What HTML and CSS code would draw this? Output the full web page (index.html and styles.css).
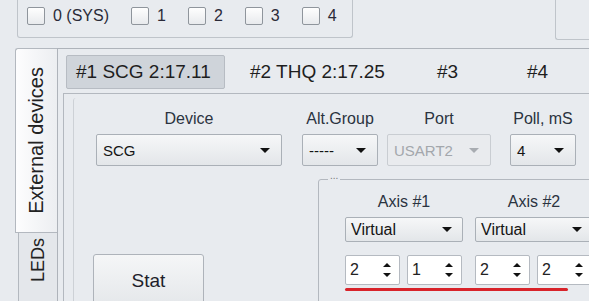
FILE: index.html
```html
<html>
<head>
  <title>Device config</title>
  <link rel="stylesheet" href="styles.css">
</head>
<body>
  <div class="top">
    <div class="channels">
      <div class="check"><span class="box"></span>0 (SYS)</div>
      <div class="check"><span class="box"></span>1</div>
      <div class="check"><span class="box"></span>2</div>
      <div class="check"><span class="box"></span>3</div>
      <div class="check"><span class="box"></span>4</div>
    </div>
    <div class="side"></div>
  </div>
  <div class="main">
    <div class="vtabs">
      <div class="vtab on"><span>External devices</span></div>
      <div class="vtab off"><span>LEDs</span></div>
    </div>
    <div class="pane">
      <div class="htabs">
        <div class="htab on">#1 SCG 2:17.11</div>
        <div class="htab">#2 THQ 2:17.25</div>
        <div class="htab">#3</div>
        <div class="htab">#4</div>
      </div>
      <div class="inner">
        <div class="frame">
          <div class="fields">
            <div class="field f-device">
              <label>Device</label>
              <div class="combo"><span>SCG</span><span class="arrow"></span></div>
            </div>
            <div class="field f-alt">
              <label>Alt.Group</label>
              <div class="combo"><span>-----</span><span class="arrow"></span></div>
            </div>
            <div class="field f-port">
              <label>Port</label>
              <div class="combo off"><span>USART2</span><span class="arrow"></span></div>
            </div>
            <div class="field f-poll">
              <label>Poll, mS</label>
              <div class="combo"><span>4</span><span class="arrow"></span></div>
            </div>
          </div>
          <div class="lower">
            <button class="stat">Stat</button>
            <fieldset class="group">
              <legend>...</legend>
              <div class="axes">
                <div class="axis">
                  <label>Axis #1</label>
                  <div class="combo small"><span>Virtual</span><span class="arrow"></span></div>
                  <div class="spins">
                    <div class="spin"><span>2</span><span class="updown"><i class="up"></i><i class="down"></i></span></div>
                    <div class="spin"><span>1</span><span class="updown"><i class="up"></i><i class="down"></i></span></div>
                  </div>
                </div>
                <div class="axis">
                  <label>Axis #2</label>
                  <div class="combo small"><span>Virtual</span><span class="arrow"></span></div>
                  <div class="spins">
                    <div class="spin"><span>2</span><span class="updown"><i class="up"></i><i class="down"></i></span></div>
                    <div class="spin"><span>2</span><span class="updown"><i class="up"></i><i class="down"></i></span></div>
                  </div>
                </div>
              </div>
              <div class="mark"></div>
            </fieldset>
          </div>
        </div>
      </div>
    </div>
  </div>
</body>
</html>
```
FILE: styles.css
```css
* {
  box-sizing: border-box;
}
body {
  margin: 0;
  width: 589px;
  height: 301px;
  overflow: hidden;
  background: #e8ebef;
  font-family: "Liberation Sans", Arial, sans-serif;
  color: #222;
}
.top {
  display: flex;
  height: 48px;
}
.channels {
  margin-left: 17px;
  width: 336px;
  height: 38px;
  flex-shrink: 0;
  border: 1px solid #bfc4ca;
  border-top: none;
  border-radius: 0 0 3px 3px;
  display: flex;
  align-items: flex-start;
  gap: 22px;
  padding: 7px 0 0 9px;
}
.check {
  display: flex;
  align-items: center;
  gap: 8px;
  font-size: 16px;
  line-height: 18px;
  color: #2a2a38;
}
.box {
  width: 18px;
  height: 18px;
  border: 1px solid #8f959c;
  border-radius: 2px;
  background: linear-gradient(#fefefe, #e8eaed);
}
.side {
  margin-left: 202px;
  width: 60px;
  height: 40px;
  flex-shrink: 0;
  border: 1px solid #bfc4ca;
  border-top: none;
  border-right: none;
  border-radius: 0 0 0 3px;
}
.main {
  display: flex;
  padding-left: 15px;
  height: 253px;
}
.vtabs {
  width: 42px;
  flex-shrink: 0;
  display: flex;
  flex-direction: column;
}
.vtab {
  flex-shrink: 0;
  border: 1px solid #b3b8bf;
  border-right: none;
  display: flex;
  flex-direction: column;
  align-items: center;
}
.vtab span {
  writing-mode: vertical-rl;
  transform: rotate(180deg);
  font-size: 18px;
  white-space: nowrap;
}
.vtab.on {
  height: 185px;
  justify-content: center;
  border-radius: 3px 0 0 0;
  background: linear-gradient(90deg, #fdfdfe, #eceef1);
}
.vtab.on span {
  font-size: 20px;
}
.vtab.off {
  margin-left: 3px;
  height: 90px;
  border-top: none;
  padding-top: 5px;
  background: #e4e7eb;
}
.pane {
  flex: 1;
  min-width: 0;
  border-left: 1px solid #aeb3ba;
  border-top: 1px solid #aeb3ba;
  padding: 6px 0 0 5px;
}
.htabs {
  display: grid;
  grid-template-columns: 174px 187px 90px 60px;
  height: 34px;
  margin: 0 0 4px 3px;
  font-size: 19px;
}
.htab {
  height: 34px;
  line-height: 34px;
  padding-left: 10px;
  white-space: nowrap;
  color: #1e1e1e;
}
.htab.on {
  width: 159px;
  padding-left: 9px;
  line-height: 32px;
  background: #cfd4da;
  border: 1px solid #b7bcc3;
  border-radius: 2px;
}
.inner {
  border-top: 1px solid #b3b8bf;
  border-left: 1px solid #b3b8bf;
  padding: 4px 0 0 9px;
  height: 210px;
}
.frame {
  border-left: 1px solid #cdd1d6;
  border-top-left-radius: 3px;
  padding: 12px 0 0 19px;
  height: 210px;
}
.fields {
  display: flex;
  margin-left: 3px;
}
.field {
  display: flex;
  flex-direction: column;
  align-items: center;
  flex-shrink: 0;
}
label {
  font-size: 16px;
  line-height: 18px;
  margin-bottom: 6px;
  color: #2b3340;
  white-space: nowrap;
}
.f-device { width: 186px; }
.f-alt { width: 76px; margin-left: 20px; }
.f-port { width: 104px; margin-left: 9px; }
.f-poll { width: 66px; margin-left: 19px; }
.combo {
  width: 100%;
  height: 32px;
  display: flex;
  align-items: center;
  justify-content: space-between;
  padding: 0 11px 0 6px;
  border: 1px solid #aab0b7;
  border-radius: 2px;
  background: linear-gradient(#f6f7f8, #e3e6e9);
  font-size: 15px;
  color: #151515;
  white-space: nowrap;
}
.combo.off {
  color: #a3a7ac;
  background: #e9ebee;
  border-color: #c9cdd2;
}
.combo.small {
  height: 25px;
  padding-left: 5px;
  padding-right: 10px;
  font-size: 16px;
}
.arrow {
  width: 0;
  height: 0;
  border-left: 5px solid transparent;
  border-right: 5px solid transparent;
  border-top: 5px solid #111;
}
.combo.off .arrow {
  border-top-color: #a8acb1;
}
.lower {
  display: flex;
  align-items: flex-start;
  margin-top: 6px;
}
.stat {
  flex-shrink: 0;
  margin-top: 82px;
  width: 111px;
  height: 54px;
  border: 1px solid #aeb3ba;
  border-radius: 3px;
  background: linear-gradient(#f5f6f7, #e4e7ea);
  font-family: "Liberation Sans", Arial, sans-serif;
  font-size: 19px;
  color: #1e1e2a;
}
.group {
  flex-shrink: 0;
  margin: 0 0 0 114px;
  width: 320px;
  padding: 7px 0 20px 26px;
  border: 1px solid #b3b8bf;
  border-radius: 3px;
}
.group legend {
  margin-left: -17px;
  padding: 0 2px 6px;
  font-size: 10px;
  line-height: 8px;
  color: #777;
}
.axes {
  display: flex;
  gap: 12px;
}
.axis {
  width: 118px;
  flex-shrink: 0;
  display: flex;
  flex-direction: column;
  align-items: center;
}
.spins {
  display: flex;
  gap: 7px;
  margin-top: 13px;
  width: 100%;
}
.spin {
  width: 55px;
  height: 30px;
  display: flex;
  align-items: center;
  justify-content: space-between;
  padding: 0 8px 0 4px;
  background: #fff;
  border: 1px solid #b5bac1;
  border-radius: 2px;
  font-size: 16px;
}
.updown {
  display: flex;
  flex-direction: column;
  gap: 6px;
}
.up, .down {
  width: 0;
  height: 0;
  border-left: 4px solid transparent;
  border-right: 4px solid transparent;
}
.up {
  border-bottom: 4px solid #111;
}
.down {
  border-top: 4px solid #111;
}
.mark {
  width: 223px;
  height: 3px;
  margin-top: 3px;
  background: #d8232a;
  border-radius: 2px;
}
```
